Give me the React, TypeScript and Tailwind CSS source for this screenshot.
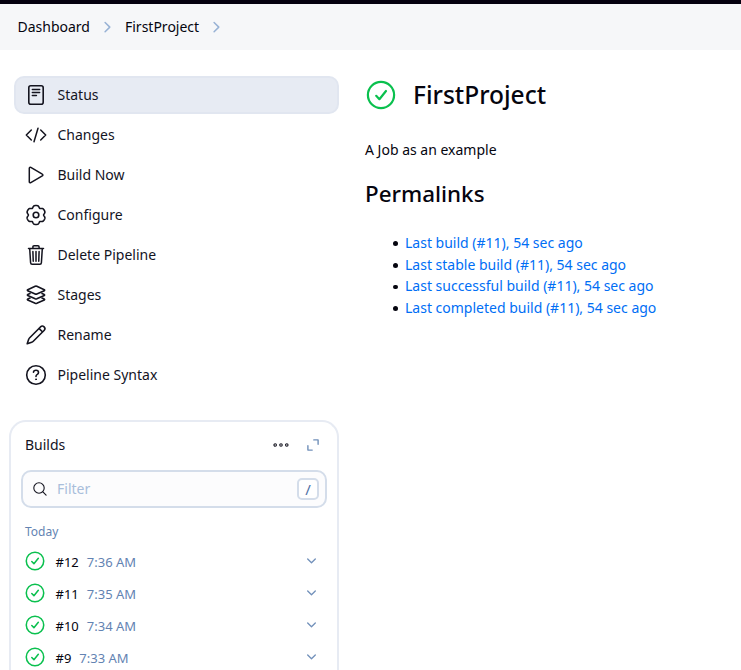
import React from "react";

function Icon({ children, width = 1.6 }: { children: React.ReactNode; width?: number }) {
  return (
    <svg className="size-6 shrink-0" viewBox="0 0 24 24" fill="none" stroke="currentColor" strokeWidth={width} strokeLinecap="round" strokeLinejoin="round">
      {children}
    </svg>
  );
}

// Six-lobed gear outline, with a lobe pointing straight up.
const gearPoints = Array.from({ length: 120 }, (_, i) => {
  const a = (i / 120) * Math.PI * 2;
  const r = 9.5 - 1.9 * Math.pow((1 - Math.cos(6 * a)) / 2, 2.4);
  return `${(12 + r * Math.sin(a)).toFixed(2)},${(12 - r * Math.cos(a)).toFixed(2)}`;
}).join(" ");

const tasks: { label: string; icon: React.ReactNode }[] = [
  {
    label: "Status",
    icon: (
      <Icon>
        <rect x="4.8" y="2.8" width="14.4" height="18.4" rx="2" />
        <path d="M8.4 6.5h7.2M8.4 9.5h7.2M8.4 12.5h4" />
      </Icon>
    ),
  },
  {
    label: "Changes",
    icon: (
      <Icon width={1.5}>
        <path d="M7.3 7 2.3 12l5 5M16.7 7l5 5-5 5M14 5.3 10 18.7" />
      </Icon>
    ),
  },
  {
    label: "Build Now",
    icon: (
      <Icon width={1.5}>
        <path d="M5.3 5.2v13.6a1 1 0 0 0 1.5.9l11.5-6.8a1 1 0 0 0 0-1.8L6.8 4.3a1 1 0 0 0-1.5.9z" />
      </Icon>
    ),
  },
  {
    label: "Configure",
    icon: (
      <Icon>
        <circle cx="12" cy="12" r="2.8" />
        <polygon points={gearPoints} />
      </Icon>
    ),
  },
  {
    label: "Delete Pipeline",
    icon: (
      <Icon width={1.5}>
        <path d="m5.7 5.6.9 14.2c.05.9.67 1.5 1.5 1.5h7.8c.83 0 1.45-.6 1.5-1.5l.9-14.2M4.5 5.5h15M12 8.6v9.6M8.9 8.6l.35 9.6M15.1 8.6l-.35 9.6M8.9 5.3V3.9a1.1 1.1 0 0 1 1.1-1.1h4a1.1 1.1 0 0 1 1.1 1.1v1.4" />
      </Icon>
    ),
  },
  {
    label: "Stages",
    icon: (
      <Icon>
        <path d="M11.2 3.3 3.7 6.8c-.5.3-.5.6 0 .9l7.5 3.3c.5.2 1.1.2 1.6 0l7.5-3.3c.5-.3.5-.6 0-.9l-7.5-3.5c-.5-.2-1.1-.2-1.6 0z" />
        <path d="m6 10.6-2.3 1c-.5.3-.5.6 0 .9l7.5 3.3c.5.2 1.1.2 1.6 0l7.5-3.3c.5-.3.5-.6 0-.9l-2.3-1" />
        <path d="m6 15.1-2.3 1c-.5.3-.5.6 0 .9l7.5 3.3c.5.2 1.1.2 1.6 0l7.5-3.3c.5-.3.5-.6 0-.9l-2.3-1" />
      </Icon>
    ),
  },
  {
    label: "Rename",
    icon: (
      <Icon>
        <path d="M16.2 4.2 5.7 14.7c-.5.5-.8 1-1 1.6L3.2 20.8l4.5-1.5c.6-.2 1.1-.5 1.6-1L19.8 7.8l.3-.3a2.5 2.5 0 0 0-3.6-3.6zM15 5.4l3.6 3.6" />
      </Icon>
    ),
  },
  {
    label: "Pipeline Syntax",
    icon: (
      <Icon>
        <circle cx="12" cy="12" r="9.3" />
        <path d="M9.5 9.2c.1-1.3 1.1-1.9 2.5-1.9s2.5.8 2.5 2.1c0 1-.5 1.5-1.2 2-.9.6-1.3 1-1.3 1.9v.2" />
        <circle cx="12" cy="16.3" r=".5" fill="currentColor" strokeWidth="1" />
      </Icon>
    ),
  },
];

const builds = [
  ["#12", "7:36 AM"],
  ["#11", "7:35 AM"],
  ["#10", "7:34 AM"],
  ["#9", "7:33 AM"],
];

const permalinks = [
  "Last build (#11), 54 sec ago",
  "Last stable build (#11), 54 sec ago",
  "Last successful build (#11), 54 sec ago",
  "Last completed build (#11), 54 sec ago",
];

function Success({ className }: { className: string }) {
  return (
    <svg className={`shrink-0 text-[#0ac04e] ${className}`} viewBox="0 0 30 30" fill="none" stroke="currentColor" strokeLinecap="round" strokeLinejoin="round">
      <circle cx="15" cy="15" r="13.1" />
      <path d="m10.2 15.8 3.2 3.4 6.6-8.2" />
    </svg>
  );
}

function Crumb({ children }: { children: string }) {
  return (
    <>
      <span>{children}</span>
      <svg className="ml-[14px] mr-[14px] h-3 w-[7px]" viewBox="0 0 7 12" fill="none" stroke="#98b2d5" strokeWidth="1.5" strokeLinecap="round" strokeLinejoin="round">
        <path d="M1.1 1.5 5.8 6.1l-4.7 4.6" />
      </svg>
    </>
  );
}

export default function App() {
  return (
    <div className="h-[670px] w-[741px] overflow-hidden bg-white font-['Noto_Sans',sans-serif] text-sm text-[#14141f]">
      <div className="h-1 bg-[#05000f]" />
      <nav className="flex h-[46px] items-center bg-[#f6f7f9] pl-[17.5px] text-[#05050f]">
        <Crumb>Dashboard</Crumb>
        <Crumb>FirstProject</Crumb>
      </nav>
      <div className="flex">
        <aside className="w-[339px] shrink-0 pt-[26px]">
          <div className="flex flex-col gap-0.5 pl-[14px]">
            {tasks.map((t, i) => (
              <a key={t.label} className={`flex h-[38px] items-center gap-[9.5px] rounded-[10px] border-2 pl-2 ${i === 0 ? "border-[#e1e6f0] bg-[#e7ebf3]" : "border-transparent"}`}>
                {t.icon}
                <span>{t.label}</span>
              </a>
            ))}
          </div>
          <section className="ml-[9px] mt-[26px] h-[270px] rounded-t-[17px] border-2 border-b-0 border-[#e7ebf3] pl-[10px] pr-[10px]">
            <header className="flex h-[48px] items-center pb-[2px] pl-1">
              <h2>Builds</h2>
              <svg className="ml-auto h-2 w-4" viewBox="0 0 16 8" fill="none" stroke="#14141f" strokeWidth="1.1">
                <circle cx="2.2" cy="4" r="1.25" />
                <circle cx="8" cy="4" r="1.25" />
                <circle cx="13.8" cy="4" r="1.25" />
              </svg>
              <svg className="ml-[18px] mr-[8px] size-3" viewBox="0 0 12 12" fill="none" stroke="#7190ba" strokeWidth="1.4" strokeLinecap="round" strokeLinejoin="round">
                <path d="M6.8.9h4.3v4.3M.9 6.8v4.3h4.3" />
              </svg>
            </header>
            <div className="flex h-[38px] items-center rounded-[10px] border-2 border-[#d4ddea] bg-[#fcfcfd] pl-[9px] pr-[6px]">
              <svg className="size-4" viewBox="0 0 16 16" fill="none" stroke="#14141f" strokeWidth="1.1" strokeLinecap="round">
                <circle cx="7" cy="7" r="5.2" />
                <path d="m10.9 10.9 3.2 3.3" />
              </svg>
              <span className="ml-[9px] text-[#a9bedb]">Filter</span>
              <kbd className="ml-auto flex size-[22px] items-center justify-center rounded-[5px] border-2 border-[#d4ddea] bg-white font-['Noto_Sans',sans-serif] text-[15px] leading-none text-[#4f72a6]">
                /
              </kbd>
            </div>
            <div className="mt-[15px] pl-1 text-xs leading-[18px] text-[#6383b2]">Today</div>
            <ul className="mt-[5px]">
              {builds.map(([n, time]) => (
                <li key={n} className="flex h-8 items-center pl-[4px] text-[13px]">
                  <Success className="-mt-0.5 size-5 stroke-[2.3]" />
                  <span className="ml-[10.5px] text-[#05050f]">{n}</span>
                  <span className="ml-2 text-[#6383b2]">{time}</span>
                  <svg className="-mt-0.5 ml-auto mr-[11px] h-[6px] w-[9px]" viewBox="0 0 9 6" fill="none" stroke="#7190ba" strokeWidth="1.3" strokeLinecap="round" strokeLinejoin="round">
                    <path d="m.7 1 3.8 3.8L8.3 1" />
                  </svg>
                </li>
              ))}
            </ul>
          </section>
        </aside>
        <main className="pl-[26px] pt-[26px] text-[#05050f]">
          <div className="flex h-[38px] items-center">
            <Success className="ml-px size-[30px] stroke-[2.2]" />
            <h1 className="ml-[17px] text-[24.5px] font-medium leading-[38px]">FirstProject</h1>
          </div>
          <p className="mt-[26px] leading-5">A Job as an example</p>
          <h2 className="mt-[17px] text-[22.4px] font-medium leading-[34px]">Permalinks</h2>
          <ul className="mt-[21px] pl-[28px] leading-[21.6px]">
            {permalinks.map((p) => (
              <li key={p} className="flex items-center">
                <span className="mr-[7.3px] mt-[2px] size-[4.7px] rounded-full bg-[#05050f]" />
                <a className="text-[#006ef5]">{p}</a>
              </li>
            ))}
          </ul>
        </main>
      </div>
    </div>
  );
}
